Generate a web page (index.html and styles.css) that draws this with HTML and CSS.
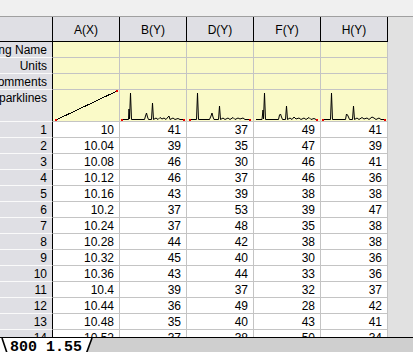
FILE: index.html
```html
<!DOCTYPE html>
<html lang="en">
<head>
    <meta charset="UTF-8">
    <title>Book1 - Sheet1</title>
    <link rel="stylesheet" href="styles.css">
</head>
<body>
    <div class="topbar"></div>
    <div class="workspace">
        <div class="sheet">
            <!-- column headers -->
            <div class="cell col-head"></div>
            <div class="cell col-head">A(X)</div>
            <div class="cell col-head">B(Y)</div>
            <div class="cell col-head">D(Y)</div>
            <div class="cell col-head">F(Y)</div>
            <div class="cell col-head">H(Y)</div>

            <!-- label rows -->
            <div class="cell row-head">Long Name</div>
            <div class="cell meta"></div><div class="cell meta"></div><div class="cell meta"></div><div class="cell meta"></div><div class="cell meta"></div>
            <div class="cell row-head">Units</div>
            <div class="cell meta"></div><div class="cell meta"></div><div class="cell meta"></div><div class="cell meta"></div><div class="cell meta"></div>
            <div class="cell row-head">Comments</div>
            <div class="cell meta"></div><div class="cell meta"></div><div class="cell meta"></div><div class="cell meta"></div><div class="cell meta"></div>

            <div class="cell row-head spark-label">Sparklines</div>
            <div class="cell meta spark">
                <svg width="66" height="31" viewBox="0 0 66 31">
                    <line x1="3" y1="30" x2="64" y2="1" stroke="#000" stroke-width="1" shape-rendering="crispEdges"/>
                    <rect x="2" y="29" width="2" height="2" fill="#e00"/>
                    <rect x="63" y="0" width="2" height="2" fill="#e00"/>
                </svg>
            </div>
            <div class="cell meta spark">
                <svg width="66" height="31" viewBox="0 0 66 31">
                    <polyline fill="none" stroke="#000" points="2,29.5 8.5,29.5 9,19 9.5,29 10.5,3 11.5,29.5 24.5,29.5 25.5,26 26.5,23 27.5,27 28.5,29.5 31.5,29.5 32.5,13 33.5,29.5 36,28 38,29.5 40,27.5 42,29 44,28 46,29.5 48,27 49,26 50,29.5 53,28 55,29.5 58,28.5 60,29.5 64,29.5"/>
                    <rect x="1" y="29" width="2" height="2" fill="#e00"/>
                    <rect x="63" y="29" width="2" height="2" fill="#e00"/>
                </svg>
            </div>
            <div class="cell meta spark">
                <svg width="66" height="31" viewBox="0 0 66 31">
                    <polyline fill="none" stroke="#000" points="3,29.5 9.5,29.5 10.5,3 11.5,29.5 22.5,29.5 24,26 25,23 26,27 27,29.5 31.5,29.5 32.5,16 33.5,29.5 36,28 38,29.5 41,28 43,29.5 46,27.5 48,29.5 51,28 53,29 56,28 58,29.5 63,29.5"/>
                    <rect x="2" y="29" width="2" height="2" fill="#e00"/>
                    <rect x="62" y="29" width="2" height="2" fill="#e00"/>
                </svg>
            </div>
            <div class="cell meta spark">
                <svg width="66" height="31" viewBox="0 0 66 31">
                    <polyline fill="none" stroke="#000" points="2,29.5 8,29.5 9,20 9.5,29 10.5,3 11.5,29.5 24.5,29.5 25.5,25 26.5,24 27.5,27 28.5,29.5 31.5,29.5 32.5,16 33.5,29.5 36,28 38,29.5 40,27 42,29 45,28 47,29.5 50,28 52,29.5 55,27.5 57,29.5 60,28.5 62,29.5 63,29.5"/>
                    <rect x="62" y="29" width="2" height="2" fill="#e00"/>
                </svg>
            </div>
            <div class="cell meta spark">
                <svg width="66" height="31" viewBox="0 0 66 31">
                    <polyline fill="none" stroke="#000" points="2,29.5 9.5,29.5 10.5,3 11.5,29.5 24.5,29.5 25.5,24 26.5,25 27.5,27 28.5,29.5 31.5,29.5 32.5,16 33.5,29.5 36,28 38,29.5 41,27.5 43,29 46,28 48,29.5 51,27 53,28 55,29.5 58,28 60,29.5 64,29.5"/>
                    <rect x="1" y="29" width="2" height="2" fill="#e00"/>
                    <rect x="63" y="29" width="2" height="2" fill="#e00"/>
                </svg>
            </div>

            <!-- data -->
            <div class="cell row-head">1</div><div class="cell num">10</div><div class="cell num">41</div><div class="cell num">37</div><div class="cell num">49</div><div class="cell num">41</div>
            <div class="cell row-head">2</div><div class="cell num">10.04</div><div class="cell num">39</div><div class="cell num">35</div><div class="cell num">47</div><div class="cell num">39</div>
            <div class="cell row-head">3</div><div class="cell num">10.08</div><div class="cell num">46</div><div class="cell num">30</div><div class="cell num">46</div><div class="cell num">41</div>
            <div class="cell row-head">4</div><div class="cell num">10.12</div><div class="cell num">46</div><div class="cell num">37</div><div class="cell num">46</div><div class="cell num">36</div>
            <div class="cell row-head">5</div><div class="cell num">10.16</div><div class="cell num">43</div><div class="cell num">39</div><div class="cell num">38</div><div class="cell num">38</div>
            <div class="cell row-head">6</div><div class="cell num">10.2</div><div class="cell num">37</div><div class="cell num">53</div><div class="cell num">39</div><div class="cell num">47</div>
            <div class="cell row-head">7</div><div class="cell num">10.24</div><div class="cell num">37</div><div class="cell num">48</div><div class="cell num">35</div><div class="cell num">38</div>
            <div class="cell row-head">8</div><div class="cell num">10.28</div><div class="cell num">44</div><div class="cell num">42</div><div class="cell num">38</div><div class="cell num">38</div>
            <div class="cell row-head">9</div><div class="cell num">10.32</div><div class="cell num">45</div><div class="cell num">40</div><div class="cell num">30</div><div class="cell num">36</div>
            <div class="cell row-head">10</div><div class="cell num">10.36</div><div class="cell num">43</div><div class="cell num">44</div><div class="cell num">33</div><div class="cell num">36</div>
            <div class="cell row-head">11</div><div class="cell num">10.4</div><div class="cell num">39</div><div class="cell num">37</div><div class="cell num">32</div><div class="cell num">37</div>
            <div class="cell row-head">12</div><div class="cell num">10.44</div><div class="cell num">36</div><div class="cell num">49</div><div class="cell num">28</div><div class="cell num">42</div>
            <div class="cell row-head">13</div><div class="cell num">10.48</div><div class="cell num">35</div><div class="cell num">40</div><div class="cell num">43</div><div class="cell num">41</div>
            <div class="cell row-head">14</div><div class="cell num">10.52</div><div class="cell num">37</div><div class="cell num">38</div><div class="cell num">50</div><div class="cell num">34</div>
        </div>
    </div>
    <div class="tabbar">
        <div class="tab">
            <svg class="tab-shape" width="96" height="15" viewBox="0 0 96 15">
                <polygon points="0,0 92,0 86,15 0,15" fill="#fff"/>
                <line x1="2" y1="0" x2="7" y2="15" stroke="#000" stroke-width="1.6"/>
                <line x1="92" y1="0" x2="86.5" y2="15" stroke="#000" stroke-width="1.6"/>
            </svg>
            <span class="tab-name">800 1.55</span>
        </div>
    </div>
</body>
</html>
```

FILE: styles.css
```css
html, body {
    margin: 0;
    height: 100%;
}

body {
    font-family: "Liberation Sans", Arial, sans-serif;
    font-size: 12px;
    color: #000;
    display: flex;
    flex-direction: column;
    overflow: hidden;
    background-color: #e1e1e1;
}

.topbar {
    height: 16px;
    flex: none;
    background-color: #f0f0f0;
    border-bottom: 1px solid #a0a0a0;
}

.workspace {
    flex: 1;
    overflow: hidden;
    background-color: #e1e1e1;
}

.sheet {
    display: grid;
    grid-template-columns: 53px repeat(5, 67px);
    grid-template-rows: 25px 16px 16px 16px 32px;
    grid-auto-rows: 16px;
    width: 388px;
}

.cell {
    box-sizing: border-box;
    display: flex;
    align-items: center;
    justify-content: flex-end;
    padding: 0 5px;
    overflow: hidden;
    white-space: nowrap;
    border-right: 1px solid #c4c4c4;
    border-bottom: 1px solid #c4c4c4;
}

.col-head {
    justify-content: center;
    padding-top: 2px;
    background-color: #dfdfe4;
    border-right-color: #000;
    border-bottom-color: #000;
}

.row-head {
    background-color: #dfdfe4;
    border-right-color: #000;
    border-bottom-color: #fafafa;
}

.spark-label {
    align-items: flex-start;
    padding-top: 1px;
}

.meta {
    background-color: #fafac8;
}

.spark {
    padding: 0;
    align-items: flex-start;
    justify-content: flex-start;
}

.spark svg {
    display: block;
}

.num {
    background-color: #fff;
}

.tabbar {
    height: 14px;
    flex: none;
    background-color: #cfcfcf;
    border-top: 1px solid #000;
    overflow: hidden;
}

.tab {
    position: relative;
    width: 96px;
    height: 15px;
}

.tab-shape {
    position: absolute;
    left: 0;
    top: 0;
}

.tab-name {
    position: relative;
    display: block;
    padding: 2px 0 0 10px;
    font-family: "Liberation Mono", "Courier New", monospace;
    font-size: 15px;
    font-weight: bold;
    line-height: 15px;
}
```
